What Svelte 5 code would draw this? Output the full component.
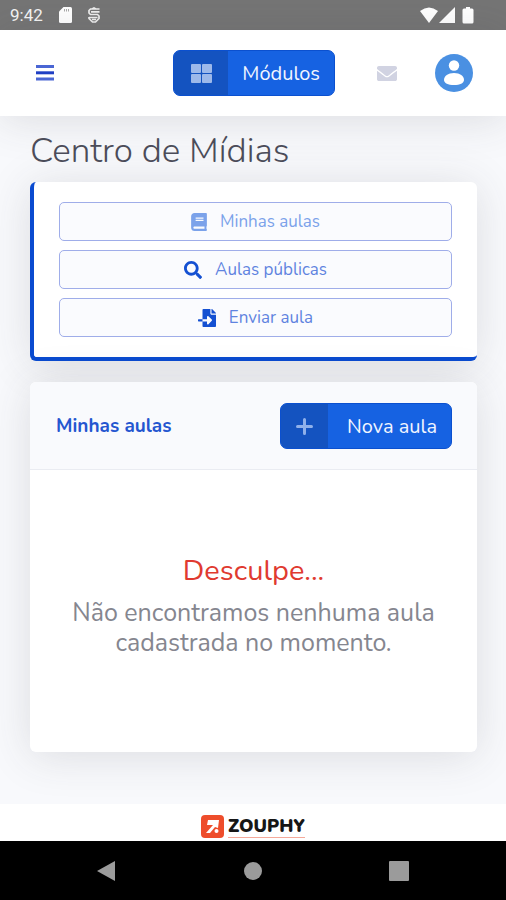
<script lang="ts">
    let active = $state("minhas");

    const tabs = [
        { id: "minhas", label: "Minhas aulas" },
        { id: "publicas", label: "Aulas públicas" },
        { id: "enviar", label: "Enviar aula" },
    ];
</script>

<div class="screen">
    <div class="status-bar">
        <div class="status-group">
            <span class="clock">9:42</span>
            <svg width="13" height="16" viewBox="0 0 13 16" aria-hidden="true">
                <path fill="#fff" d="M4.500 0h7q1.500 0 1.500 1.500v13q0 1.500-1.500 1.500h-10q-1.500 0-1.500-1.500V4.500z" />
                <path stroke="#aaa" stroke-width="1" d="M5.500 2v2.500M7.500 2v2.500M9.500 2v2.500" />
            </svg>
            <svg width="12" height="16" viewBox="0 0 12 16" fill="none" stroke="#eee" stroke-width="1.700" aria-hidden="true">
                <path d="M11.500 2H2.500L1 3.500V6l1.500 1.500h7L11 9v2.500L7.500 15h-3L1 11.500V10M3 4.800h8.500M1 10.500h8.500M4 2l2-1 2 1M4 12.500h4" />
            </svg>
        </div>
        <svg width="54" height="17" viewBox="0 0 54 17" fill="#fff" aria-hidden="true">
            <path d="M0 4q9-7 18 0L9 16z" />
            <path d="M35 0v16H19z" />
            <path d="M46 0h4v1.500h2q1.500 0 1.500 1.500v12q0 1.500-1.500 1.500h-8q-1.500 0-1.500-1.500V3q0-1.500 1.500-1.500h2z" />
        </svg>
    </div>

    <header class="topbar">
        <button class="icon-btn" aria-label="Menu">
            <svg width="18" height="17" viewBox="0 0 18 17" aria-hidden="true">
                <path stroke="#4a66d4" stroke-width="3" d="M0 1.500h18M0 14h18" />
                <path stroke="#1f3fc4" stroke-width="3" d="M0 7.800h18" />
            </svg>
        </button>
        <div class="topbar-right">
            <button class="split-btn">
                <span class="split-icon">
                    <svg width="21" height="19" viewBox="0 0 21 19" fill="#9db9ea" aria-hidden="true">
                        <rect width="10" height="9" rx="1" />
                        <rect x="11" width="10" height="9" rx="1" />
                        <rect y="10" width="10" height="9" rx="1" />
                        <rect x="11" y="10" width="10" height="9" rx="1" />
                    </svg>
                </span>
                <span class="split-label">Módulos</span>
            </button>
            <div class="user-actions">
                <button class="icon-btn" aria-label="Mensagens">
                    <svg width="20" height="15" viewBox="0 0 512 384" fill="#d1d3e2" aria-hidden="true">
                        <path d="M502 127c4-3 10 0 10 5v204c0 26-22 48-48 48H48c-26 0-48-22-48-48V132c0-5 6-8 10-5 22 17 52 39 154 113 21 15 57 48 92 48s72-33 92-48c102-74 132-96 154-113zM256 256c23 0 57-29 73-41 133-97 143-105 174-129 6-5 9-12 9-19V48c0-26-22-48-48-48H48C22 0 0 22 0 48v19c0 7 3 14 9 19 31 24 41 32 174 129 16 12 50 41 73 41z" />
                    </svg>
                </button>
                <button class="icon-btn" aria-label="Perfil">
                    <svg width="38" height="38" viewBox="0 0 38 38" aria-hidden="true">
                        <circle cx="19" cy="19" r="19" fill="#4a90e2" />
                        <circle cx="19" cy="11.500" r="5.200" fill="#fff" />
                        <path fill="#fff" d="M19 19c6 0 10 3 10 7 0 3-4 5-10 5s-10-2-10-5c0-4 4-7 10-7z" />
                    </svg>
                </button>
            </div>
        </div>
    </header>

    <main class="content">
        <h1>Centro de Mídias</h1>

        <nav class="card tabs">
            {#each tabs as tab}
                <button class="tab" class:active={active === tab.id} onclick={() => (active = tab.id)}>
                    {#if tab.id === "minhas"}
                        <svg width="16" height="18" viewBox="0 0 448 512" fill="currentColor" aria-hidden="true">
                            <path d="M448 360V24c0-13-11-24-24-24H96C43 0 0 43 0 96v320c0 53 43 96 96 96h328c13 0 24-11 24-24v-16c0-8-4-14-9-19-4-15-4-59 0-74 5-4 9-11 9-19zM128 134c0-3 3-6 6-6h212c3 0 6 3 6 6v20c0 3-3 6-6 6H134c-3 0-6-3-6-6zm0 64c0-3 3-6 6-6h212c3 0 6 3 6 6v20c0 3-3 6-6 6H134c-3 0-6-3-6-6zm253 250H96c-18 0-32-14-32-32s14-32 32-32h285c-2 17-2 47 0 64z" />
                        </svg>
                    {:else if tab.id === "publicas"}
                        <svg width="18" height="18" viewBox="0 0 512 512" fill="currentColor" aria-hidden="true">
                            <path d="M505 443l-100-100c-4-4-11-7-17-7h-16c28-35 44-80 44-128C416 93 323 0 208 0S0 93 0 208s93 208 208 208c48 0 93-16 128-44v16c0 6 3 13 7 17l100 100c9 9 24 9 34 0l28-28c9-10 9-25 0-34zM208 336c-71 0-128-57-128-128S137 80 208 80s128 57 128 128-57 128-128 128z" />
                        </svg>
                    {:else}
                        <svg width="18" height="18" viewBox="0 0 512 512" fill="currentColor" aria-hidden="true">
                            <path d="M16 288c-9 0-16 7-16 16v32c0 9 7 16 16 16h112v-64zm489-183L407 7c-4-4-11-7-17-7h-6v128h128v-6c0-6-3-13-7-17zm-153 31V0H152c-13 0-24 11-24 24v264h128v-65c0-21 26-32 41-17l95 96c10 10 10 25 0 35l-95 96c-15 15-41 4-41-17v-64H128v136c0 13 11 24 24 24h336c13 0 24-11 24-24V160H376c-13 0-24-11-24-24z" />
                        </svg>
                    {/if}
                    <span>{tab.label}</span>
                </button>
            {/each}
        </nav>

        <section class="card">
            <div class="card-header">
                <h2>Minhas aulas</h2>
                <button class="split-btn">
                    <span class="split-icon small">
                        <svg width="17" height="17" viewBox="0 0 17 17" aria-hidden="true">
                            <path stroke="#8fb0ea" stroke-width="3" stroke-linecap="round" d="M8.500 1.500v14M1.500 8.500h14" />
                        </svg>
                    </span>
                    <span class="split-label wide">Nova aula</span>
                </button>
            </div>
            <div class="empty">
                <p class="sorry">Desculpe...</p>
                <p class="message">Não encontramos nenhuma aula cadastrada no momento.</p>
            </div>
        </section>
    </main>

    <footer class="footer">
        <svg width="23" height="23" viewBox="0 0 23 23" aria-hidden="true">
            <rect width="23" height="23" rx="4" fill="#ee4d2b" />
            <path fill="#fff" d="M7 5h11l-1 8-3-1-5 6H5l7-8H6z" />
            <circle cx="15.500" cy="16" r="2" fill="#fff" />
        </svg>
        <span class="brand">ZOUPHY</span>
    </footer>

    <div class="nav-bar">
        <button class="icon-btn" aria-label="Voltar">
            <svg width="20" height="22" viewBox="0 0 20 22" aria-hidden="true"><path fill="#9b9b9b" d="M18 1v20L0 11z" /></svg>
        </button>
        <button class="icon-btn" aria-label="Início">
            <svg width="20" height="20" viewBox="0 0 20 20" aria-hidden="true"><circle cx="10" cy="10" r="9" fill="#9b9b9b" /></svg>
        </button>
        <button class="icon-btn" aria-label="Recentes">
            <svg width="20" height="20" viewBox="0 0 20 20" aria-hidden="true"><rect width="20" height="20" rx="1" fill="#9b9b9b" /></svg>
        </button>
    </div>
</div>

<style>
    :global(body) {
        margin: 0;
    }

    .screen {
        display: flex;
        flex-direction: column;
        min-height: 100vh;
        background-color: #f8f9fc;
        font-family: Nunito, "Open Sans", "Noto Sans", sans-serif;
    }

    h1,
    h2,
    p {
        margin: 0;
    }

    button {
        padding: 0;
        border: none;
        background: none;
        font-family: inherit;
        cursor: pointer;
    }

    svg {
        display: block;
        flex: none;
    }

    .status-bar {
        display: flex;
        align-items: center;
        justify-content: space-between;
        height: 30px;
        padding: 0 32px 0 10px;
        background-color: #757575;
    }

    .status-group {
        display: flex;
        align-items: center;
        gap: 16px;
    }

    .clock {
        color: #f4f4f4;
        font-family: Roboto, sans-serif;
        font-size: 17px;
    }

    .topbar {
        display: flex;
        align-items: center;
        justify-content: space-between;
        height: 86px;
        padding: 0 33px 0 36px;
        background-color: #fff;
        box-shadow: 0 4px 44px rgba(58, 59, 69, 0.15);
    }

    .topbar-right {
        display: flex;
        align-items: center;
        gap: 42px;
    }

    .user-actions {
        display: flex;
        align-items: center;
        gap: 38px;
    }

    .split-btn {
        display: flex;
        height: 46px;
        border: 1px solid #0b50cf;
        border-radius: 7px;
        background-color: #1662e2;
        overflow: hidden;
    }

    .split-icon {
        display: flex;
        align-items: center;
        justify-content: center;
        width: 54px;
        height: 100%;
        background-color: #1453c0;
    }

    .split-icon.small {
        width: 47px;
    }

    .split-label {
        align-self: center;
        padding: 0 14px;
        color: #f1f5ff;
        font-size: 20px;
        white-space: nowrap;
    }

    .split-label.wide {
        padding-left: 19px;
    }

    .content {
        flex: 1;
        padding: 14px 29px 52px 30px;
    }

    h1 {
        margin-bottom: 10px;
        color: #4b4c59;
        font-size: 35px;
        font-weight: 300;
        line-height: 42px;
    }

    .card {
        border-radius: 6px;
        background-color: #fff;
        box-shadow: 0 4px 44px rgba(58, 59, 69, 0.15);
    }

    .tabs {
        display: flex;
        flex-direction: column;
        gap: 9px;
        margin-bottom: 21px;
        padding: 20px 25px;
        border-bottom: 4px solid #0a4bd0;
        border-left: 4px solid #0a4bd0;
    }

    .tab {
        display: flex;
        align-items: center;
        justify-content: center;
        gap: 13px;
        height: 39px;
        border: 1px solid #9fade9;
        border-radius: 5px;
        background-color: #fafbfe;
        color: #1450d2;
        font-size: 17px;
    }

    .tab span {
        color: #5f83e0;
    }

    .tab.active,
    .tab.active span {
        color: #7ba2ea;
    }

    .card-header {
        display: flex;
        align-items: center;
        justify-content: space-between;
        padding: 21px 25px 20px 26px;
        border-bottom: 1px solid #eaecf2;
        border-radius: 6px 6px 0 0;
        background-color: #f9fafd;
    }

    h2 {
        color: #2456d0;
        font-size: 19px;
        font-weight: 700;
    }

    .empty {
        padding: 83px 40px 94px;
        text-align: center;
    }

    .sorry {
        margin-bottom: 9px;
        color: #e03a30;
        font-size: 29px;
        line-height: 36px;
    }

    .message {
        color: #85868f;
        font-size: 25px;
        line-height: 30px;
    }

    .footer {
        display: flex;
        align-items: center;
        justify-content: center;
        gap: 4px;
        height: 37px;
        padding-top: 8px;
        box-sizing: border-box;
        background-color: #fff;
    }

    .brand {
        border-bottom: 1px solid #f5a99a;
        color: #161616;
        font-size: 18px;
        font-weight: 900;
        line-height: 22px;
    }

    .nav-bar {
        display: flex;
        align-items: center;
        justify-content: space-between;
        height: 59px;
        padding: 0 97px;
        background-color: #000;
    }
</style>
